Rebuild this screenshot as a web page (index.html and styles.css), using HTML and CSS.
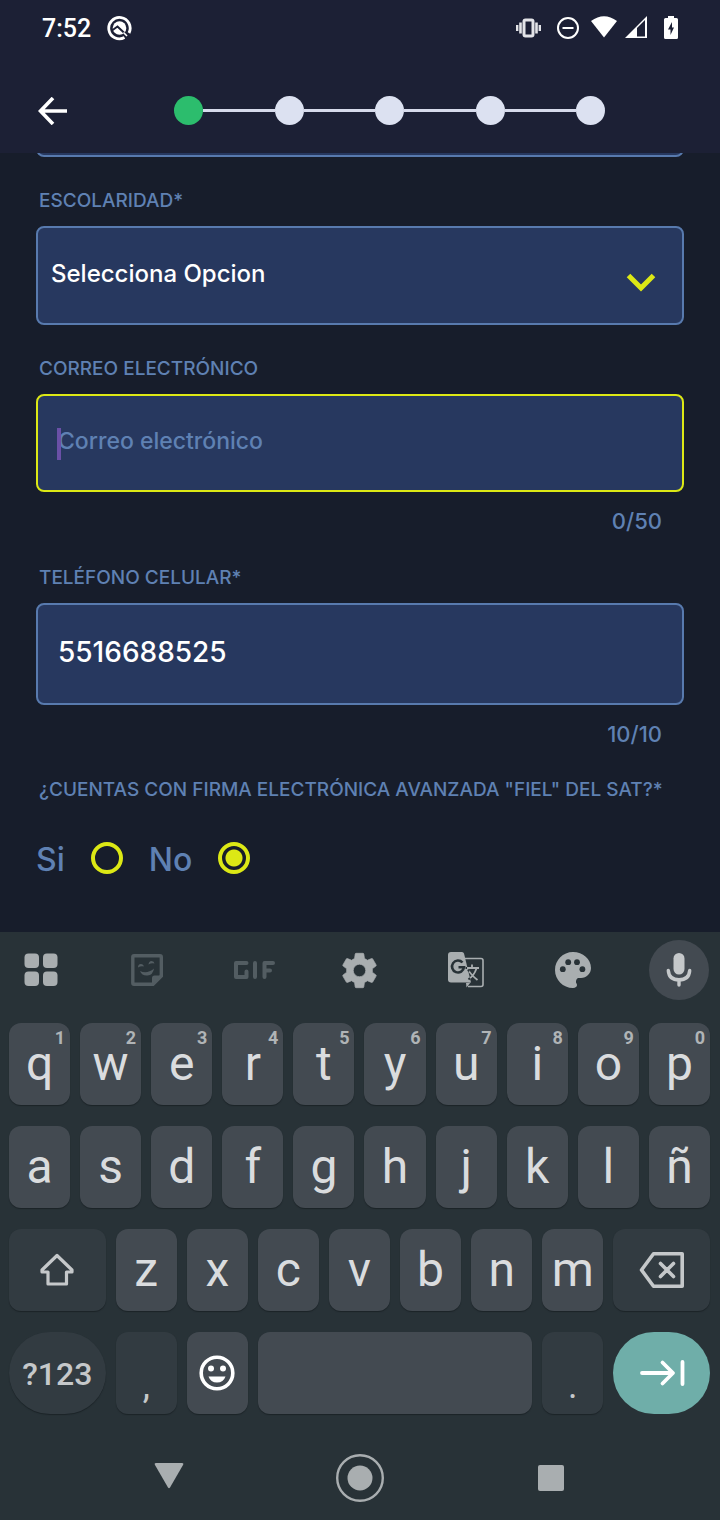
FILE: index.html
```html
<!DOCTYPE html>
<html lang="es">
<head>
<meta charset="utf-8">
<meta name="viewport" content="width=device-width, initial-scale=1">
<title>Registro</title>
<link rel="stylesheet" href="styles.css">
</head>
<body>
<header class="header">
  <div class="status">
    <span class="clock">7:52</span>
    <svg width="26" height="26" viewBox="0 0 26 26" fill="none" stroke="#fff">
      <circle cx="12.500" cy="13" r="6.800" fill="#fff" stroke="none"/>
      <path d="M5 15.500L10.500 11.500 20 20.500" stroke="#1c2035" stroke-width="2"/>
      <path d="M17.500 22.600A10.700 10.700 0 1 1 22 18" stroke-width="2.800"/>
      <path d="M16.500 17.500l3.500 3.500" stroke="#fff" stroke-width="1.600"/>
    </svg>
    <div class="status-icons">
      <svg width="33" height="26" viewBox="0 0 33 26" fill="none" stroke="#e3e4e8">
        <rect x="8" y="5" width="9" height="16" rx="1.500" stroke-width="3"/>
        <path d="M4.500 7.500v11M20.500 7.500v11" stroke-width="2.600"/>
        <path d="M1.200 10v6M23.800 10v6" stroke-width="2.400"/>
      </svg>
      <svg width="26" height="26" viewBox="0 0 26 26" fill="none" stroke="#fff" stroke-width="2">
        <circle cx="11" cy="13" r="10"/><path d="M5.500 13h11"/>
      </svg>
      <svg width="26" height="26" viewBox="0 0 26 26" fill="#fff"><path d="M0 6Q13-3.500 26 6L13 22.500z"/></svg>
      <svg width="31" height="26" viewBox="0 0 31 26"><path d="M0 23L22 1V23zM12 13V21.500H20V5z" fill="#fff" fill-rule="evenodd"/></svg>
      <svg width="14" height="26" viewBox="0 0 14 26"><path d="M4 1h6v2h2.500q1.500 0 1.500 1.500v18q0 1.500-1.500 1.500h-11Q0 24 0 22.500v-18Q0 3 1.500 3H4zM8 7L4 14.500h2.500V20L10 12.500H8z" fill="#fff" fill-rule="evenodd"/></svg>
    </div>
  </div>
  <div class="appbar">
    <button class="back" aria-label="Volver">
      <svg width="29" height="28" viewBox="0 0 29 28" fill="none" stroke="#fff" stroke-width="3.600"><path d="M29 14H3M15 1L2.500 14 15 27"/></svg>
    </button>
    <div class="stepper">
      <span class="dot active"></span><span class="line"></span><span class="dot"></span><span class="line"></span><span class="dot"></span><span class="line"></span><span class="dot"></span><span class="line"></span><span class="dot"></span>
    </div>
  </div>
</header>

<main class="form">
  <div class="cut"><div class="box"></div></div>
  <div class="field">
    <label for="school">ESCOLARIDAD*</label>
    <div class="stack">
      <select id="school" class="box"><option>Selecciona Opcion</option></select>
      <svg class="chevron" width="30" height="20" viewBox="0 0 30 20" fill="none" stroke="#dce815" stroke-width="5"><path d="M2.500 2.500L15 15 27.500 2.500"/></svg>
    </div>
  </div>
  <div class="field">
    <label for="mail">CORREO ELECTRÓNICO</label>
    <div class="stack">
      <input id="mail" class="box focused" type="email" placeholder="Correo electrónico" maxlength="50">
      <span class="caret"></span>
    </div>
    <span class="counter">0/50</span>
  </div>
  <div class="field">
    <label for="phone">TELÉFONO CELULAR*</label>
    <input id="phone" class="box phone" type="tel" value="5516688525" maxlength="10">
    <span class="counter">10/10</span>
  </div>
  <fieldset class="question">
    <legend>¿CUENTAS CON FIRMA ELECTRÓNICA AVANZADA "FIEL" DEL SAT?*</legend>
    <div class="options">
      <label>Si<input type="radio" name="fiel"></label>
      <label>No<input type="radio" name="fiel" checked></label>
    </div>
  </fieldset>
</main>

<section class="keyboard" aria-label="Teclado">
  <div class="tools">
    <button aria-label="Menú"><svg width="34" height="34" viewBox="0 0 34 34" fill="#a9aeb0"><rect x=".5" y=".5" width="14.500" height="14.500" rx="4"/><rect x="19" y=".5" width="14.500" height="14.500" rx="4"/><rect x=".5" y="18.500" width="14.500" height="14.500" rx="4"/><rect x="19" y="18.500" width="14.500" height="14.500" rx="4"/></svg></button>
    <button aria-label="Stickers"><svg width="32" height="32" viewBox="0 0 32 32" fill="#535d62"><path d="M3 1.800H29Q30.300 1.800 30.300 3V22L22 30.300H3Q1.800 30.300 1.800 29V3Q1.800 1.800 3 1.800z" fill="none" stroke="#535d62" stroke-width="3.400"/><path d="M21 31v-7q0-2.500 2.500-2.500H31z"/><path d="M9 17q7 3.500 14-2.500-1 6.500-6.500 7T9 17z"/><path d="M7 13.500q0-3.500 2.800-3.500t3 2.500q-2.800-.8-5.800 1zM17.500 10.500q.3-3.500 3-3.500t3 2.500q-3-.8-6 1z"/></svg></button>
    <button aria-label="GIF"><svg width="42" height="20" viewBox="0 0 42 20" fill="none" stroke="#535d62" stroke-width="4" stroke-linecap="round" stroke-linejoin="round"><path d="M13.500 3H3V17H13.500V11.500M22 3V17M31.500 17V3H40M31.500 10.500H37"/></svg></button>
    <button aria-label="Ajustes"><svg width="43" height="43" viewBox="0 0 24 24" fill="#a9aeb0"><path fill-rule="evenodd" stroke="#a9aeb0" stroke-width=".4" stroke-linejoin="round" d="M19.140 12.940c.04-.3.060-.61.060-.94 0-.32-.02-.64-.07-.94l2.030-1.580c.18-.14.230-.41.120-.61l-1.920-3.320c-.12-.22-.37-.29-.59-.22l-2.390.960c-.5-.38-1.030-.7-1.620-.94l-.36-2.540c-.04-.24-.24-.41-.48-.41h-3.840c-.24 0-.43.170-.47.410l-.36 2.540c-.59.240-1.130.570-1.620.940l-2.390-.96c-.22-.08-.47 0-.59.220L2.740 8.870c-.12.210-.08.470.120.610l2.030 1.580c-.05.300-.09.630-.09.940s.02.640.070.940l-2.030 1.580c-.18.140-.23.410-.12.610l1.920 3.320c.12.220.370.290.590.220l2.390-.96c.5.380 1.030.700 1.620.940l.36 2.540c.05.240.240.410.480.410h3.840c.24 0 .44-.17.470-.41l.36-2.540c.59-.24 1.130-.56 1.620-.94l2.390.960c.22.080.470 0 .59-.22l1.920-3.320c.12-.22.070-.47-.12-.61l-2.010-1.580zM12 15.500a3.500 3.500 0 1 1 0-7 3.500 3.500 0 0 1 0 7z"/></svg></button>
    <button aria-label="Traducir"><svg width="36" height="36" viewBox="0 0 36 36" fill="none"><path d="M17 6.500H33Q35 6.500 35 8.500V32.500Q35 34.500 33 34.500H20" stroke="#a9aeb0" stroke-width="1.600"/><path d="M3 0H14Q15.500 0 16 1.500L23 30.500H3Q0 30.500 0 27.500V3Q0 0 3 0z" fill="#a9aeb0"/><path d="M18 31l4.500-.5L18.500 35.500z" fill="#a9aeb0"/><path d="M14.500 10.500A6 6 0 1 0 16 15.200H10.500" stroke="#283237" stroke-width="2.600"/><path d="M17.500 16H31M24 12.500V16M19.500 16.500Q22 22 29.500 28M28.500 16.500Q26 24 19.500 28" stroke="#a9aeb0" stroke-width="1.800"/><path d="M17.500 16h1.500M20 17.500l1 2M20.500 27.500l1.500-1.500" stroke="#283237" stroke-width="1.800"/></svg></button>
    <button aria-label="Temas"><svg width="36" height="36" viewBox="3 3 18 18" fill="#a9aeb0"><path d="M12 3c-4.970 0-9 4.030-9 9s4.030 9 9 9c1.300 0 2-.67 2-1.500 0-.39-.15-.74-.39-1.010-.23-.26-.1-2.490 1.120-2.490H16c2.760 0 5-2.240 5-5 0-4.420-4.030-8-9-8z"/><g fill="#283237"><circle cx="6.900" cy="11.600" r="1.450"/><circle cx="9.600" cy="8.100" r="1.450"/><circle cx="14" cy="8.100" r="1.450"/><circle cx="16.700" cy="11.600" r="1.450"/></g></svg></button>
    <button class="mic" aria-label="Dictar"><svg width="26" height="36" viewBox="0 0 26 36" fill="none"><rect x="7.500" y="1" width="11" height="21.500" rx="5.500" fill="#c5c8ca"/><path d="M2.300 18.500Q3 27.800 13 27.800T23.700 18.500M13 28v5" stroke="#c5c8ca" stroke-width="3.400" stroke-linecap="round"/></svg></button>
  </div>
  <div class="keys">
    <button class="key">q<sup>1</sup></button><button class="key">w<sup>2</sup></button><button class="key">e<sup>3</sup></button><button class="key">r<sup>4</sup></button><button class="key">t<sup>5</sup></button><button class="key">y<sup>6</sup></button><button class="key">u<sup>7</sup></button><button class="key">i<sup>8</sup></button><button class="key">o<sup>9</sup></button><button class="key">p<sup>0</sup></button>
    <button class="key">a</button><button class="key">s</button><button class="key">d</button><button class="key">f</button><button class="key">g</button><button class="key">h</button><button class="key">j</button><button class="key">k</button><button class="key">l</button><button class="key">ñ</button>
    <button class="key dark wide" aria-label="Mayúsculas"><svg width="36" height="34" viewBox="0 0 36 34" fill="none" stroke="#c5c8ca" stroke-width="3.200" stroke-linejoin="round"><path d="M18 2.500L33 17V19H27.500V31H9V19H3V17z"/></svg></button>
    <button class="key">z</button><button class="key">x</button><button class="key">c</button><button class="key">v</button><button class="key">b</button><button class="key">n</button><button class="key">m</button>
    <button class="key dark wide" aria-label="Borrar"><svg width="46" height="38" viewBox="0 0 46 38" fill="none" stroke="#c5c8ca" stroke-width="3.600" stroke-linejoin="round" stroke-linecap="round"><path d="M14.500 2.800H43.200V35.200H14.500L2.500 19zM21.500 12.500l13 13M34.500 12.500l-13 13"/></svg></button>
    <button class="key dark wide pill symbols">?123</button>
    <button class="key dark mark">,</button>
    <button class="key" aria-label="Emoji"><svg width="36" height="36" viewBox="0 0 36 36" fill="#fff"><circle cx="18" cy="18" r="15.800" fill="none" stroke="#fff" stroke-width="3.600"/><circle cx="12" cy="13.500" r="3"/><circle cx="24" cy="13.500" r="3"/><path d="M9.500 21.500h17q-2 6-8.500 6t-8.500-6z"/></svg></button>
    <button class="key space" aria-label="Espacio"></button>
    <button class="key dark mark">.</button>
    <button class="key wide pill next" aria-label="Siguiente"><svg width="46" height="28" viewBox="0 0 46 28" fill="none" stroke="#fff" stroke-width="3.800" stroke-linecap="round" stroke-linejoin="round"><path d="M3 14H33M23.500 3.500L34 14 23.500 24.500M43.500 3V25"/></svg></button>
  </div>
  <nav class="nav">
    <button aria-label="Atrás"><svg width="30" height="30" viewBox="0 0 30 30" fill="#a9aeb0"><path d="M2 0H28Q30 0 29 2L16 24.500Q15 26 14 24.500L1 2Q0 0 2 0z"/></svg></button>
    <button aria-label="Inicio"><svg width="48" height="48" viewBox="0 0 48 48"><circle cx="24" cy="24" r="22.800" fill="none" stroke="#a9aeb0" stroke-width="2.400"/><circle cx="24" cy="24" r="12.500" fill="#a9aeb0"/></svg></button>
    <button aria-label="Recientes"><svg width="28" height="28" viewBox="0 0 28 28"><rect x="1" y="1" width="26" height="26" rx="2" fill="#a9aeb0"/></svg></button>
  </nav>
</section>
</body>
</html>
```
FILE: styles.css
```css
* { box-sizing: border-box; }

body {
  margin: 0;
  min-height: 100vh;
  display: flex;
  flex-direction: column;
  background: #171d2b;
  color: #5f81b3;
  font-family: Inter, "Liberation Sans", sans-serif;
  font-weight: 500;
}

button {
  margin: 0;
  padding: 0;
  border: 0;
  background: none;
  font: inherit;
  color: inherit;
}

svg { display: block; flex: none; }

/* Header */
.header { background: #1c2035; }

.status {
  display: flex;
  align-items: center;
  gap: 16px;
  height: 56px;
  padding: 0 42px;
  color: #fff;
  font-family: Roboto, sans-serif;
  font-size: 25px;
}

.status-icons { display: flex; gap: 8px; margin-left: auto; }

.appbar {
  display: flex;
  align-items: center;
  padding: 40px 115px 28px 38px;
}

.back { margin-right: 107px; }

.stepper { flex: 1; display: flex; align-items: center; }

.dot {
  flex: none;
  width: 29px;
  height: 29px;
  border-radius: 50%;
  background: #dce1f1;
}

.dot.active { background: #2cbd6d; }

.line { flex: 1; height: 3px; background: #d6daeb; }

/* Form */
.form { flex: 1; padding: 0 36px 40px; }

.cut {
  display: flex;
  align-items: flex-end;
  height: 4px;
  overflow: hidden;
}

.cut .box { flex: none; }

.box {
  display: block;
  width: 100%;
  height: 99px;
  margin: 0;
  padding: 0 20px 4px;
  border: 2px solid #587aae;
  border-radius: 8px;
  background: #27385f;
  color: #fff;
  font: inherit;
  font-size: 24px;
  outline: 0;
}

select.box { appearance: none; padding: 0 13px 4px; }
.box::placeholder { color: #5f81b3; opacity: 1; }
.box.focused { height: 98px; border-color: #dce815; font-size: 23px; }
.box.phone { height: 102px; font-size: 28px; }

.field { display: flex; flex-direction: column; padding-top: 32px; }

.field > label,
.question legend {
  padding: 0 3px;
  font-size: 19px;
  line-height: 24px;
}

.field > label { margin-bottom: 13px; }

.stack { position: relative; display: grid; align-items: center; }
.stack > * { grid-area: 1 / 1; }

.chevron {
  justify-self: end;
  margin: 14px 28px 0 0;
  pointer-events: none;
}

.caret {
  position: absolute;
  left: 21px;
  top: 34px;
  width: 4px;
  height: 32px;
  background: #6a50a7;
}

.counter {
  align-self: flex-end;
  padding: 16px 22px 0 0;
  font-size: 22px;
  line-height: 26px;
}

.question { margin: 0; padding: 31px 0 0; border: 0; }
.question legend { float: left; width: 100%; }

.options {
  clear: both;
  display: flex;
  gap: 26px;
  padding-top: 38px;
  font-size: 32px;
  line-height: 40px;
}

.options label { display: flex; align-items: center; gap: 26px; }

.options input {
  appearance: none;
  width: 32px;
  height: 32px;
  margin: 0 0 4px;
  border: 4px solid #dce815;
  border-radius: 50%;
}

.options input:checked {
  background: radial-gradient(circle, #dce815 8px, transparent 9px);
}

/* Keyboard */
.keyboard {
  padding: 8px 10px 18px 9px;
  background: #283237;
  color: #dadcde;
  font-family: Roboto, sans-serif;
  font-weight: 400;
}

.tools { display: flex; justify-content: space-between; padding: 0 1px 0 2px; }

.tools button {
  display: grid;
  place-items: center;
  width: 60px;
  height: 60px;
}

.tools .mic { border-radius: 50%; background: #434a51; }

.keys {
  display: grid;
  grid-template-columns: repeat(20, minmax(0, 1fr));
  gap: 21px 10px;
  padding: 23px 0 40px;
}

.key {
  position: relative;
  grid-column: span 2;
  display: grid;
  place-items: center;
  height: 82px;
  border-radius: 12px;
  background: #434a51;
  box-shadow: 0 1px 1px #1b2327;
  font-size: 48px;
  line-height: 48px;
}

.key sup {
  position: absolute;
  top: 6px;
  right: 5px;
  color: #b0b4b6;
  font-size: 18px;
  font-weight: 700;
  line-height: 18px;
}

.dark { background: #323b41; color: #c5c8ca; }
.wide { grid-column: span 3; }
.space { grid-column: span 8; }
.pill { border-radius: 42px; }
.symbols { padding-top: 2px; font-size: 32px; font-weight: 500; }
.mark { padding-top: 26px; font-size: 36px; line-height: 40px; }
.next { background: #6faea9; box-shadow: none; }

.nav {
  display: flex;
  justify-content: space-between;
  padding: 0 135px 0 136px;
}

.nav button {
  display: grid;
  place-items: center;
  width: 48px;
  height: 48px;
}
```
